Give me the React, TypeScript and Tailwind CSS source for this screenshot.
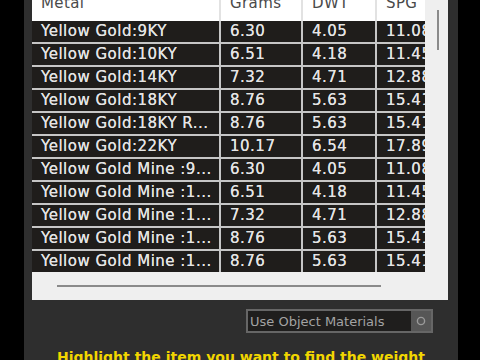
const rows = [
  { metal: "Yellow Gold:9KY", grams: "6.30", dwt: "4.05", spg: "11.08" },
  { metal: "Yellow Gold:10KY", grams: "6.51", dwt: "4.18", spg: "11.45" },
  { metal: "Yellow Gold:14KY", grams: "7.32", dwt: "4.71", spg: "12.88" },
  { metal: "Yellow Gold:18KY", grams: "8.76", dwt: "5.63", spg: "15.41" },
  { metal: "Yellow Gold:18KY R...", grams: "8.76", dwt: "5.63", spg: "15.41" },
  { metal: "Yellow Gold:22KY", grams: "10.17", dwt: "6.54", spg: "17.89" },
  { metal: "Yellow Gold Mine :9...", grams: "6.30", dwt: "4.05", spg: "11.08" },
  { metal: "Yellow Gold Mine :1...", grams: "6.51", dwt: "4.18", spg: "11.45" },
  { metal: "Yellow Gold Mine :1...", grams: "7.32", dwt: "4.71", spg: "12.88" },
  { metal: "Yellow Gold Mine :1...", grams: "8.76", dwt: "5.63", spg: "15.41" },
  { metal: "Yellow Gold Mine :1...", grams: "8.76", dwt: "5.63", spg: "15.41" },
];

const headers = ["Metal", "Grams", "DWT", "SPG"];

const gridCols = "grid grid-cols-[187px_80px_72px_80px] gap-x-[2px]";

export default function App() {
  return (
    <div className="flex h-[360px] w-[480px] overflow-hidden bg-black font-['DejaVu_Sans',sans-serif]">
      <div className="ml-[24px] flex w-[434px] flex-col bg-[#2e2e2e]">
        {/* metal list */}
        <div className="ml-[8px] flex h-[300px] w-[416px] shrink-0 bg-[#efefef]">
          <div className="flex w-[393px] flex-col overflow-hidden">
            <div className={`${gridCols} h-[21px] shrink-0 bg-[#e2e2e2]`}>
              {headers.map((h) => (
                <div key={h} className="overflow-hidden bg-white pl-[9px]">
                  <div className="-mt-[4px] text-[15px] leading-[15px] tracking-[0.4px] text-[#4a4a4a]">{h}</div>
                </div>
              ))}
            </div>
            <div className="flex shrink-0 flex-col gap-y-[2px] bg-[#c6c6c6]">
              {rows.map((r, i) => (
                <div key={i} className={`${gridCols} h-[21px]`}>
                  {[r.metal, r.grams, r.dwt, r.spg].map((v, j) => (
                    <div
                      key={j}
                      className="flex items-center overflow-hidden whitespace-nowrap bg-[#1f1d1b] pl-[9px] text-[15px] leading-none tracking-[0.5px] text-[#e4e4e4] [text-shadow:0_0_0.6px_#e4e4e4]"
                    >
                      {v}
                    </div>
                  ))}
                </div>
              ))}
            </div>
            <div className="ml-[25px] mt-[13px] h-[2px] w-[324px] shrink-0 bg-[#8a8a8a]" />
          </div>
          <div className="ml-[12px] mt-[10px] h-[40px] w-[2px] bg-[#8a8a8a]" />
        </div>

        {/* options */}
        <div className="ml-[222px] mt-[9px] flex h-[24px] w-[187px] shrink-0 items-center border-2 border-[#666] bg-[#1f1e1d]">
          <span className="flex-1 pl-[2px] text-[13px] leading-none text-[#a3a3a3]">Use Object Materials</span>
          <span className="flex h-full w-[20px] items-center justify-center bg-[#565656]">
            <svg width="10" height="10" viewBox="0 0 10 10">
              <circle cx="5" cy="5" r="3.6" fill="none" stroke="#9a9a9a" strokeWidth="1.4" />
            </svg>
          </span>
        </div>

        <div className="mt-[17px] shrink-0 text-center text-[14px] font-bold leading-none text-[#f2d600]">
          Highlight the item you want to find the weight
        </div>
      </div>
    </div>
  );
}
